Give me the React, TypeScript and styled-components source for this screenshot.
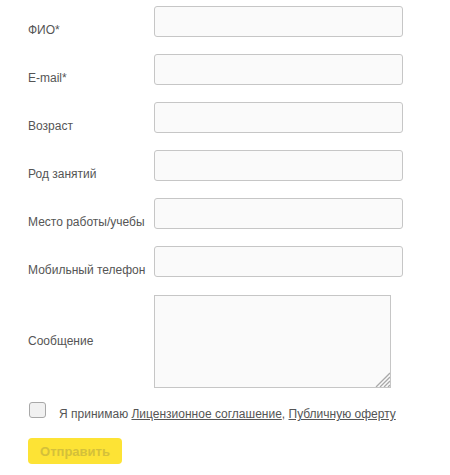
import React from "react";
import styled, { createGlobalStyle } from "styled-components";

const Global = createGlobalStyle`
  html, body { margin: 0; padding: 0; background: #fff; }
  body { font-family: "Liberation Sans", Arial, sans-serif; }
`;

const Form = styled.form`
  display: flex;
  flex-direction: column;
  padding: 5px 0 0 28px;
  width: 450px;
  box-sizing: border-box;
`;

const Row = styled.div<{ $tall?: boolean }>`
  display: grid;
  grid-template-columns: 126px auto;
  align-items: ${(p) => (p.$tall ? "center" : "start")};
  height: ${(p) => (p.$tall ? "auto" : "48px")};
`;

const Label = styled.label`
  font-size: 12px;
  color: #555;
  align-self: center;
  padding-top: 1px;
`;

const Input = styled.input`
  margin-top: 1px;
  width: 249px;
  height: 31px;
  box-sizing: border-box;
  border: 1px solid #c6c6c6;
  border-radius: 3px;
  background: #fafafa;
  outline: none;
`;

const AreaWrap = styled.div`
  position: relative;
  margin-top: 2px;
  width: 237px;
  height: 93px;
`;

const TextArea = styled.textarea`
  width: 237px;
  height: 93px;
  box-sizing: border-box;
  border: 1px solid #c6c6c6;
  border-radius: 0;
  background: #fafafa;
  outline: none;
  display: block;
  resize: none;
  margin: 0;
`;

const Grip = styled.svg`
  position: absolute;
  right: 1px;
  bottom: 1px;
  width: 15px;
  height: 15px;
  pointer-events: none;
`;

const Agree = styled.div`
  display: flex;
  align-items: flex-start;
  margin-top: 14px;
  font-size: 12px;
  line-height: 14px;
  color: #555;
`;

const Box = styled.span`
  width: 17px;
  height: 16px;
  box-sizing: border-box;
  border: 1px solid #a8a8a8;
  border-radius: 3px;
  background: #f1f1f1;
  margin: 0 13px 0 1px;
  flex: none;
`;

const AgreeText = styled.span`
  margin-top: 5px;
`;

const Link = styled.a`
  color: #555;
  text-decoration: underline;
`;

const Button = styled.button`
  margin-top: 17px;
  width: 94px;
  height: 26px;
  border: none;
  border-radius: 4px;
  background: #fde335;
  color: #d4c03a;
  font-family: "Liberation Sans", Arial, sans-serif;
  font-weight: bold;
  font-size: 13px;
  padding: 0;
`;

const fields = [
  "ФИО*",
  "E-mail*",
  "Возраст",
  "Род занятий",
  "Место работы/учебы",
  "Мобильный телефон",
];

export default function App() {
  return (
    <>
      <Global />
      <Form onSubmit={(e) => e.preventDefault()}>
        {fields.map((f) => (
          <Row key={f}>
            <Label>{f}</Label>
            <Input type="text" />
          </Row>
        ))}
        <Row $tall>
          <Label>Сообщение</Label>
          <AreaWrap>
            <TextArea />
            <Grip viewBox="0 0 15 15">
              <g stroke="#a9a9a9" strokeWidth="1.3">
                <line x1="15" y1="1" x2="1" y2="15" />
                <line x1="15" y1="5" x2="5" y2="15" />
                <line x1="15" y1="9" x2="9" y2="15" />
                <line x1="15" y1="13" x2="13" y2="15" />
              </g>
            </Grip>
          </AreaWrap>
        </Row>
        <Agree>
          <Box />
          <AgreeText>
            Я принимаю <Link href="#">Лицензионное соглашение</Link>,{" "}
            <Link href="#">Публичную оферту</Link>
          </AgreeText>
        </Agree>
        <div>
          <Button type="submit">Отправить</Button>
        </div>
      </Form>
    </>
  );
}
